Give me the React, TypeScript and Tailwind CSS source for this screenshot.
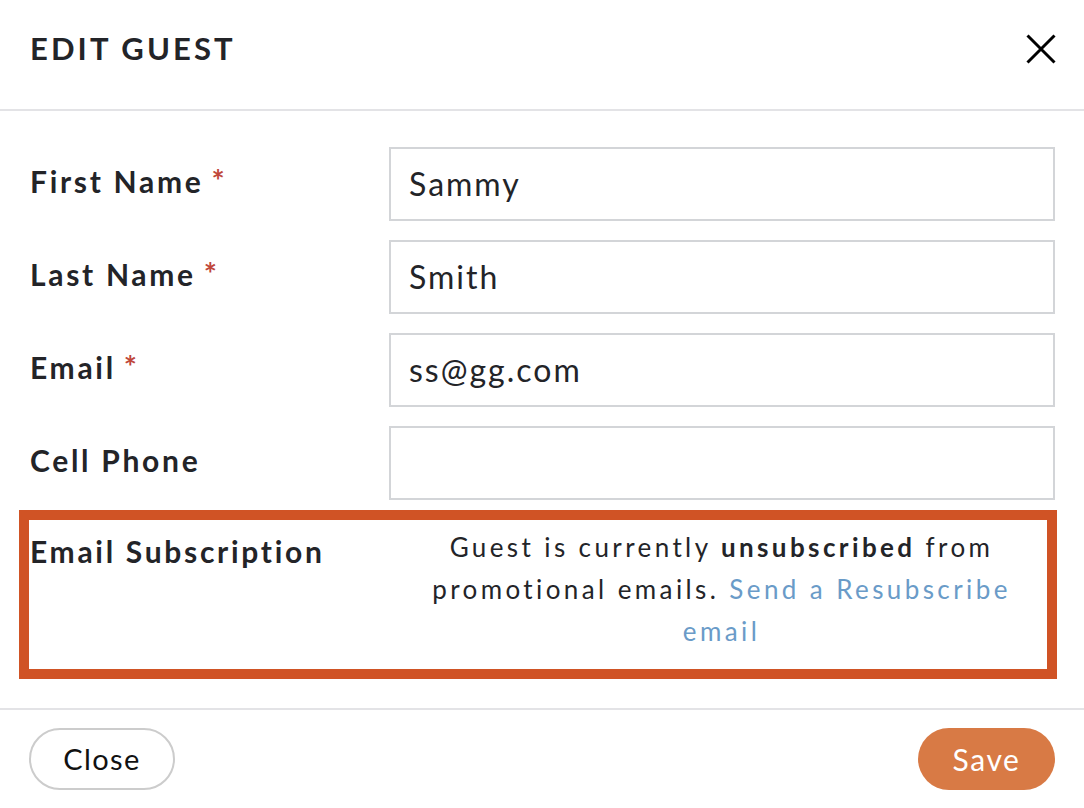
import React, { useState } from "react";

const font = "font-['Lato','Noto_Sans',sans-serif]";

const Field: React.FC<{ label: string; required?: boolean; value: string }> = ({ label, required, value }) => {
    const [text, setText] = useState(value);
    return (
        <div className="grid grid-cols-[359px_1fr] items-start">
            <label className="pt-[16px] text-[30px] font-bold tracking-[2.7px] text-[#232428] leading-[36px]">
                {label}
                {required && (
                    <span className="ml-[8px] inline-block translate-y-[4px] text-[31px] leading-[26px] align-top text-[#c0473a]">*</span>
                )}
            </label>
            <input
                value={text}
                onChange={(e) => setText(e.target.value)}
                className="h-[74px] w-full border-2 border-[#d3d5d8] px-[18px] pb-[2px] text-[32px] tracking-[2px] text-[#232428] outline-none"
            />
        </div>
    );
};

const App: React.FC = () => {
    return (
        <div className={`${font} h-[808px] w-[1084px] bg-white flex flex-col`}>
            {/* header */}
            <div className="h-[112px] border-b-2 border-[#e3e3e6] flex items-center justify-between pl-[30px] pr-[28px] pb-[12px]">
                <h1 className="text-[31px] font-bold tracking-[3.1px] text-[#232428]">EDIT GUEST</h1>
                <button title="Close" className="w-[30px] h-[30px] flex items-center justify-center">
                    <svg width="30" height="30" viewBox="0 0 30 30">
                        <path d="M1.5 1.5 L28.5 28.5 M28.5 1.5 L1.5 28.5" stroke="#000" strokeWidth="3" />
                    </svg>
                </button>
            </div>

            {/* body */}
            <div className="pt-[36px] pb-[29px] flex flex-col">
                <div className="flex flex-col gap-[19px] pl-[30px] pr-[29px]">
                    <Field label="First Name" required value="Sammy" />
                    <Field label="Last Name" required value="Smith" />
                    <Field label="Email" required value="ss@gg.com" />
                    <Field label="Cell Phone" value="" />
                </div>
                <div className="mt-[10px] ml-[19px] mr-[27px] h-[169px] border-[10px] border-[#d05325] grid grid-cols-[360px_1fr] pl-[1px]">
                    <div className="pt-[13px] text-[30px] font-bold tracking-[2.7px] text-[#232428] leading-[36px] whitespace-nowrap">
                        Email Subscription
                    </div>
                    <p className="pt-[6px] pl-[18px] pr-[12px] text-center text-[26px] tracking-[3.4px] leading-[42px] text-[#232428]">
                        Guest is currently <b className="font-bold">unsubscribed</b> from promotional emails.{" "}
                        <a className="text-[#6a9bc8] cursor-pointer">Send a Resubscribe email</a>
                    </p>
                </div>
            </div>

            {/* footer */}
            <div className="border-t-2 border-[#e3e3e6] flex items-center justify-between pl-[29px] pr-[29px] pt-[18px] pb-[18px]">
                <button className="h-[62px] w-[146px] rounded-full border-2 border-[#cccccc] text-[29px] tracking-[1.4px] text-[#111]">
                    Close
                </button>
                <button className="h-[62px] w-[137px] rounded-full bg-[#d87a45] text-[30px] tracking-[1.6px] text-white">
                    Save
                </button>
            </div>
        </div>
    );
};

export default App;
